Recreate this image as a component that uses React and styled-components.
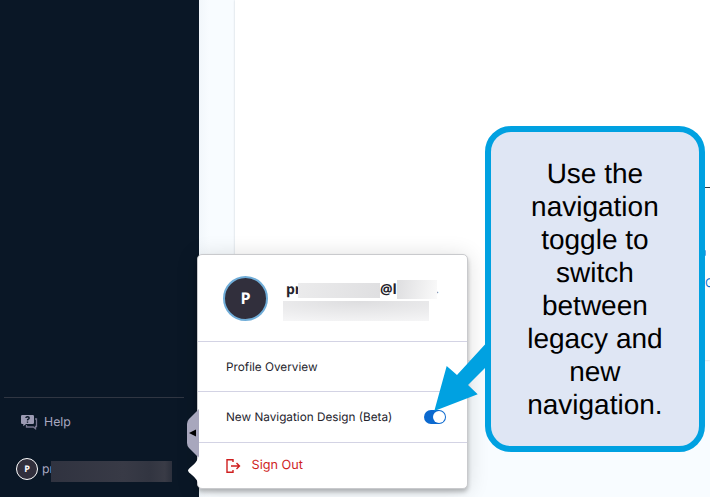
import React from "react";
import styled, { createGlobalStyle } from "styled-components";

const GlobalStyle = createGlobalStyle`
  * { box-sizing: border-box; }
  body {
    margin: 0;
    overflow: hidden;
    font-family: Inter, sans-serif;
    text-rendering: geometricPrecision;
  }
`;

const Shell = styled.div`
  position: relative;
  display: flex;
  width: 710px;
  height: 497px;
  overflow: hidden;
  background: #f8fcff;
`;

const Sidebar = styled.aside`
  display: flex;
  flex-direction: column;
  justify-content: flex-end;
  width: 199px;
  height: 497px;
  padding: 0 15px 16px 4px;
  background: #0a1726;
`;

const SidebarRule = styled.div`
  height: 1px;
  background: #303642;
`;

const HelpLink = styled.div`
  display: flex;
  align-items: center;
  height: 47px;
  padding-left: 17px;
  gap: 6px;
  color: #a9a8c0;
  font-size: 12.3px;
`;

const UserLink = styled.div`
  display: flex;
  align-items: center;
  height: 24px;
  margin-top: 12px;
  padding: 0 11px 0 12px;
  color: #a9a8c0;
  font-size: 12.3px;
`;

const Avatar = styled.div`
  display: flex;
  flex: none;
  align-items: center;
  justify-content: center;
  width: ${(p) => p.$size}px;
  height: ${(p) => p.$size}px;
  border: ${(p) => p.$ring};
  border-radius: 50%;
  background: #312f3c;
  color: #fff;
  font: 700 ${(p) => p.$font}px "Open Sans", sans-serif;
  line-height: 1;
  padding-bottom: ${(p) => p.$lift || 0}px;
`;

const UserName = styled.span`
  width: 9px;
  margin-left: 4px;
  white-space: nowrap;
  line-height: 20px;
`;

const SidebarMask = styled.div`
  position: relative;
  width: 121px;
  height: 21px;
  margin-top: 5px;
  background: linear-gradient(90deg, #303340, #383a46 60%, #323541 82%, #393b46 94%, #2c303c);
`;

const Main = styled.main`
  flex: 1;
  height: 497px;
  padding-left: 36px;
  background: linear-gradient(90deg, #f2f7fb, #f8fcff 10px);
`;

const Panel = styled.section`
  display: flex;
  flex-direction: column;
  align-items: flex-end;
  height: 360px;
  padding-top: 187px;
  background: #fff;
  box-shadow: 0 0 2px rgba(40, 50, 70, 0.22);
`;

const PanelRule = styled.div`
  width: 5px;
  height: 1px;
  background: #3c3c40;
`;

const PanelDot = styled.div`
  width: 5px;
  height: 6px;
  margin-top: 62px;
  border-left: 1px solid #6aaae3;
  border-radius: 1px;
`;

const PanelLink = styled.div`
  width: 5px;
  height: 18px;
  margin-top: 18px;
  color: #1174d4;
  font-size: 12px;
  line-height: 18px;
`;

const Popover = styled.section`
  position: absolute;
  left: 197px;
  top: 254px;
  width: 271px;
  height: 235px;
  border: 1px solid #c9cacd;
  border-radius: 5px;
  background: #fff;
  box-shadow: 0 3px 4px rgba(0, 0, 0, 0.24), 0 2px 22px rgba(0, 0, 0, 0.14);
`;

const Profile = styled.div`
  display: flex;
  height: 87px;
  padding: 21px 0 0 25px;
  border-bottom: 1px solid #d3d3e4;
`;

const Identity = styled.div`
  margin-left: 15px;
`;

const EmailLine = styled.div`
  display: flex;
  height: 24px;
  padding-left: 3px;
  color: #24232c;
  font: 700 14px/28px "Open Sans", sans-serif;
`;

const EmailPart = styled.span`
  width: ${(p) => p.$width}px;
  white-space: nowrap;
`;

const EmailDot = styled(EmailPart)`
  margin-left: -1px;
  color: #8f8f94;
  font-size: 9px;
`;

const EmailMask = styled.span`
  position: relative;
  width: ${(p) => p.$width}px;
  height: ${(p) => p.$height}px;
  margin-top: ${(p) => p.$top}px;
  background: linear-gradient(100deg, ${(p) => p.$from}, ${(p) => p.$to});
`;

const NameMask = styled.div`
  position: relative;
  width: 146px;
  height: 20px;
  margin-top: 1px;
  background: radial-gradient(ellipse 100% 110% at 52% 0, #dddddf, #f5f5f6);
`;

const MenuRow = styled.div`
  display: flex;
  align-items: center;
  height: ${(p) => p.$height}px;
  padding: 0 21px 0 28px;
  border-bottom: ${(p) => (p.$last ? "0" : "1px solid #d3d3e4")};
  color: ${(p) => (p.$danger ? "#cf1f1f" : "#24232c")};
  font-size: ${(p) => (p.$danger ? 12.7 : 11.75)}px;
  gap: 10.5px;
`;

const MenuLabel = styled.span`
  line-height: 16px;
`;

const Switch = styled.span`
  display: flex;
  justify-content: flex-end;
  width: 22px;
  height: 14px;
  margin-left: auto;
  padding: 1px;
  border-radius: 7px;
  background: #0b69cf;
`;

const Knob = styled.span`
  width: 12px;
  height: 12px;
  border-radius: 50%;
  background: #fff;
`;

const Callout = styled.aside`
  position: absolute;
  left: 485.4px;
  top: 126px;
  width: 220px;
  height: 326px;
  padding: 25px 20px 0 19px;
  border: 6px solid #00a1e1;
  border-radius: 26px;
  background: #dfe6f4;
  color: #000;
  font: 28px/33px "Liberation Sans", Arial, sans-serif;
  text-align: center;
`;

const CalloutLine = styled.div`
  white-space: nowrap;
`;

const Overlay = styled.svg`
  position: absolute;
  left: ${(p) => p.$left}px;
  top: ${(p) => p.$top}px;
`;

const calloutLines = ["Use the", "navigation", "toggle to", "switch", "between", "legacy and", "new", "navigation."];

function HelpIcon() {
  return (
    <svg width="17" height="16" viewBox="0 0 17 16">
      <path d="M14 5h1.500v7.500h-1v2.200l-2.200-1.700H5.500v-2" fill="none" stroke="#77768f" strokeWidth="1.300" />
      <path d="M1.200 1h10.600q1.200 0 1.200 1.200v6.600q0 1.200-1.200 1.200H5l-2.700 2.200V10H1.200Q0 10 0 8.800V2.200Q0 1 1.200 1z" fill="#9c9bb3" />
      <path d="M4.800 4q.2-1.200 1.700-1.200 1.700 0 1.700 1.300 0 .9-1.600 1.600v.8M6.500 7.600v1.100" fill="none" stroke="#0a1726" strokeWidth="1.400" />
    </svg>
  );
}

function SignOutIcon() {
  return (
    <svg width="15" height="14" viewBox="0 0 15 14" fill="none" stroke="#cf1f1f" strokeWidth="1.400">
      <path d="M7 3V.8H1v12.400h6V11M5 7h8.500M10.500 4l3 3-3 3" />
    </svg>
  );
}

export default function App() {
  return (
    <>
      <GlobalStyle />
      <Shell>
        <Sidebar>
          <SidebarRule />
          <HelpLink><HelpIcon />Help</HelpLink>
          <UserLink>
            <Avatar $size={22} $ring="1.5px solid #fff" $font={9} $lift={1}>P</Avatar>
            <UserName>pr</UserName>
            <SidebarMask />
          </UserLink>
        </Sidebar>
        <Main>
          <Panel>
            <PanelRule />
            <PanelDot />
            <PanelLink>G</PanelLink>
          </Panel>
        </Main>
        <Popover>
          <Profile>
            <Avatar $size={45} $ring="2px solid #70add8" $font={16} $lift={2}>P</Avatar>
            <Identity>
              <EmailLine>
                <EmailPart $width={12}>pr</EmailPart>
                <EmailMask $width={82} $height={15} $top={7} $from="#ebebec" $to="#dfdfe1" />
                <EmailPart $width={17}>@l</EmailPart>
                <EmailMask $width={40} $height={19} $top={4} $from="#dedee0" $to="#fafafa" />
                <EmailDot $width={4}>.</EmailDot>
              </EmailLine>
              <NameMask />
            </Identity>
          </Profile>
          <MenuRow $height={50}><MenuLabel>Profile Overview</MenuLabel></MenuRow>
          <MenuRow $height={51}>
            <MenuLabel>New Navigation Design (Beta)</MenuLabel>
            <Switch><Knob /></Switch>
          </MenuRow>
          <MenuRow $height={45} $danger $last><SignOutIcon /><MenuLabel>Sign Out</MenuLabel></MenuRow>
        </Popover>
        <Overlay $left={187} $top={408} width="12" height="78" viewBox="0 0 12 78">
          <path d="M12 1v49L2 40Q0 38 0 35V16q0-3 2-5z" fill="#a8a7bd" />
          <path d="M2 25l7-3.500v7z" fill="#000" />
          <path d="M12 48q-2 6-7 10-4 3-4 4.500t4 4.500q5 4 7 10z" fill="#fff" />
        </Overlay>
        <Overlay $left={430} $top={338} width="60" height="76" viewBox="430 338 60 76">
          <path d="M434.300 411L446.700 366l10.300 9 33-36v24l-22 22 9.700 9.300z" fill="#00a1e1" />
        </Overlay>
        <Callout>
          {calloutLines.map((line) => <CalloutLine key={line}>{line}</CalloutLine>)}
        </Callout>
      </Shell>
    </>
  );
}
